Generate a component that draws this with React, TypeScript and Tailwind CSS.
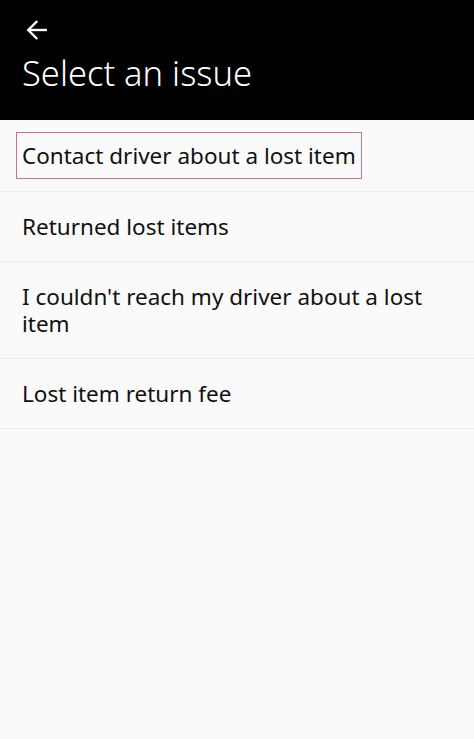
const issues = [
  "Contact driver about a lost item",
  "Returned lost items",
  "I couldn't reach my driver about a lost item",
  "Lost item return fee",
];

export default function App() {
  return (
    <div className="min-h-[739px] w-full bg-[#fafafa] font-['Noto_Sans',sans-serif]">
      <header className="h-[120px] bg-black px-[22px] pt-[15px] text-white">
        <svg width="30" height="30" viewBox="0 0 24 24" fill="none" stroke="white" strokeWidth="1.9" strokeLinecap="square">
          <path d="M19 12H6" />
          <path d="M11.5 5.5 5 12l6.5 6.5" />
        </svg>
        <h1 className="mt-[8px] text-[34.5px] font-light leading-[40px]">Select an issue</h1>
      </header>
      <ul>
        {issues.map((label, i) => (
          <li key={label} className={`border-b border-[#ececec] px-4 ${i === 0 ? "py-3" : "py-[11px]"}`}>
            <span
              className={`inline-block border-[1.5px] px-[5px] py-[9px] text-[22.5px] leading-[27px] text-[#111] ${
                i === 0 ? "border-[#cc7096]" : "border-transparent"
              }`}
            >
              {label}
            </span>
          </li>
        ))}
      </ul>
    </div>
  );
}
